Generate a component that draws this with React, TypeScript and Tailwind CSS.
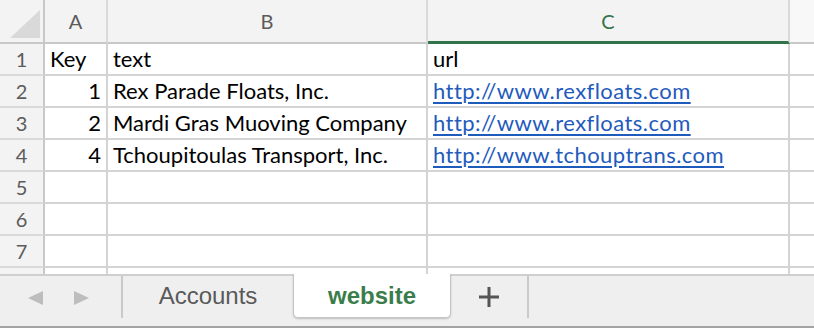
import React from 'react'

const rows: [string, string, string][] = [
  ['Key', 'text', 'url'],
  ['1', 'Rex Parade Floats, Inc.', 'http://www.rexfloats.com'],
  ['2', 'Mardi Gras Muoving Company', 'http://www.rexfloats.com'],
  ['4', 'Tchoupitoulas Transport, Inc.', 'http://www.tchouptrans.com'],
  ['', '', ''],
  ['', '', ''],
  ['', '', ''],
  ['', '', ''],
]

const cols = 'grid grid-cols-[45px_63px_320px_362px_1fr]'
const font = { fontFamily: 'Lato, "Liberation Sans", sans-serif' }

export default function App() {
  return (
    <div className="w-[814px] h-[328px] overflow-hidden bg-white flex flex-col" style={font}>
      <div className="flex-1 overflow-hidden">
        {/* column headers */}
        <div className={`${cols} h-[44px] bg-[#f3f3f3] text-[#5b5b5b] text-[20px]`}>
          <div className="relative border-r-2 border-b-2 border-[#c8c8c8]">
            <div
              className="absolute left-[10px] top-[10px] w-[30px] h-[28px] bg-[#d9d9d9]"
              style={{ clipPath: 'polygon(100% 0, 100% 100%, 0 100%)' }}
            />
          </div>
          <div className="flex items-center justify-center border-r-2 border-b-2 border-[#d9d9d9] border-b-[#c8c8c8]">A</div>
          <div className="flex items-center justify-center border-r-2 border-b-2 border-[#d9d9d9] border-b-[#c8c8c8]">B</div>
          <div className="flex items-center justify-center border-r-2 border-[#d9d9d9] border-b-[3px] border-b-[#32734a] text-[#32734a] pt-[1px]">C</div>
          <div className="bg-[#f8f8f8] border-b-2 border-[#c8c8c8]" />
        </div>
        {rows.map((r, i) => (
          <div key={i} className={`${cols} h-[32px] text-[22px] leading-[30px] text-black`}>
            <div className="bg-[#f3f3f3] text-[#5b5b5b] text-[20px] text-center border-r-2 border-r-[#c8c8c8] border-b-2 border-b-[#d9d9d9]">
              {i < 7 ? i + 1 : ''}
            </div>
            <div className={`px-[5px] border-r-2 border-b-2 border-[#d4d4d4] ${i === 0 ? 'text-left' : 'text-right'}`}>{r[0]}</div>
            <div className="px-[5px] border-r-2 border-b-2 border-[#d4d4d4] whitespace-nowrap">{r[1]}</div>
            <div className="px-[5px] border-r-2 border-b-2 border-[#d4d4d4] whitespace-nowrap">
              {i === 0 ? r[2] : <span className="text-[#1f5bbd] underline underline-offset-[3px] tracking-[0.45px]">{r[2]}</span>}
            </div>
            <div className="border-b-2 border-[#d4d4d4]" />
          </div>
        ))}
      </div>

      {/* sheet tabs */}
      <div className="relative h-[54px] shrink-0 bg-[#efefef] border-t-2 border-[#cfcfcf] border-b-[2px] border-b-[#a3a3a3] flex items-stretch text-[24px]" style={{ fontFamily: '"Liberation Sans", Arial, sans-serif' }}>
        <div className="w-[121px] flex items-center justify-center gap-[31px] pb-[6px] pr-[4px]">
          <svg width="15" height="14" viewBox="0 0 15 14"><path d="M15 0 L15 14 L0 7 Z" fill="#bdbdbd" /></svg>
          <svg width="15" height="14" viewBox="0 0 15 14"><path d="M0 0 L0 14 L15 7 Z" fill="#bdbdbd" /></svg>
        </div>
        <div className="w-[172px] flex items-center justify-center border-l-2 border-[#c9c9c9] mb-[8px] text-[#595959] pb-[2px]">
          Accounts
        </div>
        <div className="w-[158px] -mt-[2px] mb-[8px] bg-white rounded-b-[5px] border-x border-b border-[#c4c4c4] shadow-[0_1px_2px_rgba(0,0,0,0.2)] flex items-center justify-center font-bold text-[#3a7d4b]">
          website
        </div>
        <div className="w-[76px] flex items-center justify-center mb-[8px]">
          <svg width="20" height="20" viewBox="0 0 20 20"><path d="M8.5 0h3v8.5H20v3h-8.5V20h-3v-8.5H0v-3h8.5z" fill="#555" /></svg>
        </div>
        <div className="flex-1 border-l-2 border-[#c9c9c9] mb-[8px]" />
      </div>
    </div>
  )
}
